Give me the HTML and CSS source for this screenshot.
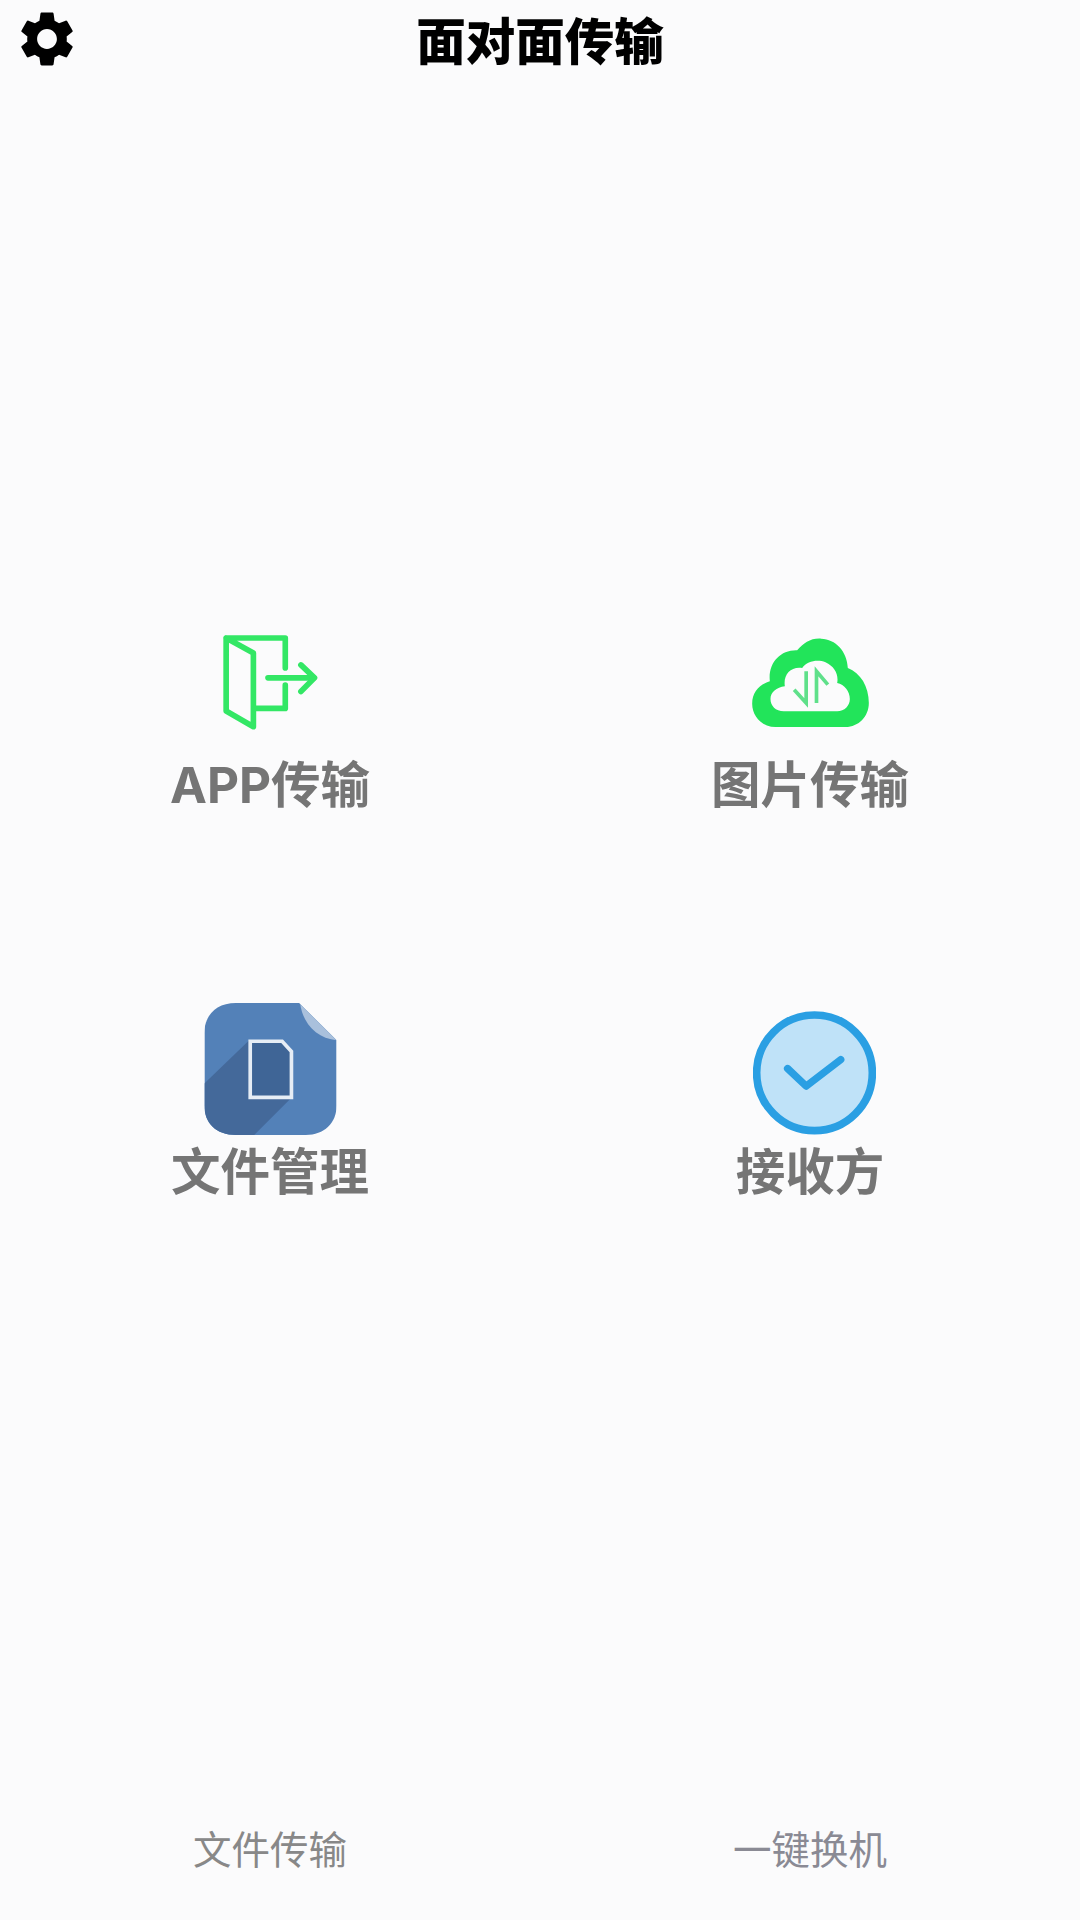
FILE: index.html
```html
<!DOCTYPE html>
<html lang="zh-CN">
<head>
    <meta charset="UTF-8">
    <meta name="viewport" content="width=device-width, initial-scale=1.0">
    <title>面对面传输</title>
    <link rel="stylesheet" href="styles.css">
</head>
<body>
    <div class="page">
        <header class="top-bar">
            <svg class="gear" viewBox="0 0 24 24">
                <path d="M19.14 12.94c.04-.3.06-.61.06-.94 0-.32-.02-.64-.07-.94l2.03-1.58c.18-.14.23-.41.12-.61l-1.92-3.32c-.12-.22-.37-.29-.59-.22l-2.39.96c-.5-.38-1.03-.7-1.62-.94l-.36-2.54c-.04-.24-.24-.41-.48-.41h-3.84c-.24 0-.43.17-.47.41l-.36 2.54c-.59.24-1.13.57-1.62.94l-2.39-.96c-.22-.08-.47 0-.59.22L2.74 8.87c-.12.21-.08.47.12.61l2.03 1.58c-.05.3-.09.63-.09.94s.02.64.07.94l-2.03 1.58c-.18.14-.23.41-.12.61l1.92 3.32c.12.22.37.29.59.22l2.39-.96c.5.38 1.03.7 1.62.94l.36 2.54c.05.24.24.41.48.41h3.84c.24 0 .44-.17.47-.41l.36-2.54c.59-.24 1.13-.56 1.62-.94l2.39.96c.22.08.47 0 .59-.22l1.92-3.32c.12-.22.07-.47-.12-.61l-2.01-1.58zM12 15.6c-1.98 0-3.6-1.62-3.6-3.6s1.62-3.6 3.6-3.6 3.6 1.62 3.6 3.6-1.62 3.6-3.6 3.6z"/>
            </svg>
            <h1 class="title">面对面传输</h1>
        </header>

        <main class="menu">
            <div class="menu-item">
                <div class="icon-slot">
                    <svg class="icon icon-door" viewBox="210 40 300 295">
                        <g fill="none" stroke="#33e765" stroke-width="17" stroke-linejoin="round" stroke-linecap="round">
                            <path d="M228 55L310 100V322L228 275V55H406V145"/>
                            <path d="M406 197V267H315"/>
                            <path d="M354 175H492"/>
                            <path d="M453 136L494 175L453 216"/>
                        </g>
                    </svg>
                </div>
                <div class="menu-label">APP传输</div>
            </div>

            <div class="menu-item">
                <div class="icon-slot">
                    <svg class="icon icon-cloud" viewBox="185 55 350 267">
                        <path fill="#22e45a" fill-rule="evenodd" d="M255 322C215 322 185 290 185 252C185 218 205 195 238 185C232 130 270 90 320 92C340 70 360 55 392 57C435 58 470 95 472 145C510 160 535 200 535 250C535 290 505 322 465 322ZM280 275C255 275 240 258 240 238C240 218 258 203 283 200C278 165 300 140 335 145C350 125 380 118 405 128C432 140 445 165 440 190C462 195 478 215 478 238C478 258 462 275 440 275Z"/>
                        <g fill="none" stroke="#5fe08a" stroke-width="11">
                            <path d="M347 155V250L311 210"/>
                            <path d="M378 250V155L412 195"/>
                        </g>
                    </svg>
                </div>
                <div class="menu-label">图片传输</div>
            </div>

            <div class="menu-item">
                <div class="icon-slot">
                    <svg class="icon icon-file" viewBox="130 38 398 397">
                        <defs>
                            <clipPath id="file-shape">
                                <path d="M225 38H415L528 150V345C528 400 490 435 435 435H225C165 435 130 400 130 345V130C130 75 165 38 225 38Z"/>
                            </clipPath>
                        </defs>
                        <g clip-path="url(#file-shape)">
                            <rect x="130" y="38" width="398" height="397" fill="#5381b8"/>
                            <path d="M130 280L265 150L395 320L280 435H130Z" fill="#44699a"/>
                            <path d="M418 38C425 100 470 145 528 150Z" fill="#a9c0dc"/>
                        </g>
                        <path d="M268 153H364L392 184V322H268Z" fill="#3f6596" stroke="#e6edf5" stroke-width="11"/>
                    </svg>
                </div>
                <div class="menu-label">文件管理</div>
            </div>

            <div class="menu-item">
                <div class="icon-slot">
                    <svg class="icon icon-check" viewBox="158 62 370 373">
                        <circle cx="343" cy="248" r="174" fill="#bfe2f8" stroke="#2a9fe3" stroke-width="23"/>
                        <path d="M262 235L318 288L422 208" fill="none" stroke="#2a9fe3" stroke-width="22" stroke-linecap="round" stroke-linejoin="round"/>
                    </svg>
                </div>
                <div class="menu-label">接收方</div>
            </div>
        </main>

        <footer class="tabs">
            <div class="tab">文件传输</div>
            <div class="tab tab-alt">一键换机</div>
        </footer>
    </div>
</body>
</html>
```

FILE: styles.css
```css
body {
    margin: 0;
    background-color: #fbfbfc;
    font-family: Inter, "Noto Sans CJK SC", sans-serif;
}

.page {
    display: flex;
    flex-direction: column;
    height: 1920px;
}

.top-bar {
    display: grid;
    grid-template-columns: 1fr auto 1fr;
    align-items: start;
    height: 84px;
    padding-left: 14px;
    padding-right: 14px;
}

.gear {
    width: 66px;
    height: 66px;
    margin-top: 6px;
}

.title {
    margin: 12px 0 0;
    color: #000;
    font-size: 49.5px;
    line-height: 60px;
    font-weight: 900;
}

.menu {
    flex: 1;
    display: grid;
    grid-template-columns: 1fr 1fr;
    grid-auto-rows: max-content;
    row-gap: 188px;
    padding-top: 532px;
}

.menu-item {
    display: flex;
    flex-direction: column;
    align-items: center;
}

.icon-slot {
    display: flex;
    align-items: center;
    justify-content: center;
    height: 132px;
    margin-bottom: 7px;
}

/* reference icons are slightly soft */
.icon {
    filter: blur(0.5px);
}

.icon-door {
    width: 100px;
    height: 98px;
}

.icon-cloud {
    width: 117px;
    height: 89px;
}

.icon-file {
    width: 133px;
    height: 132px;
}

.icon-check {
    width: 123px;
    height: 124px;
    margin-top: 8px;
    margin-left: 8px;
}

.menu-label {
    color: #757575;
    font-size: 49.5px;
    line-height: 60px;
    font-weight: 700;
}

.tabs {
    display: grid;
    grid-template-columns: 1fr 1fr;
    align-items: center;
    height: 140px;
    padding-bottom: 6px;
    box-sizing: border-box;
}

.tab {
    color: #888;
    font-size: 38.5px;
    text-align: center;
}

.tab-alt {
    color: #8a8a94;
}
```
